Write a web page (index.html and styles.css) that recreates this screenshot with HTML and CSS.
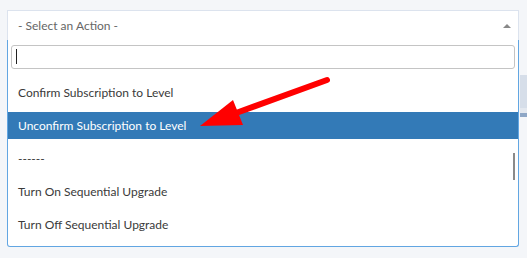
FILE: index.html
```html
<!DOCTYPE html>
<html lang="en">
<head>
    <meta charset="UTF-8">
    <meta name="viewport" content="width=device-width, initial-scale=1.0">
    <title>Select an Action</title>
    <link rel="stylesheet" href="styles.css">
</head>
<body>
    <div class="page">
        <div class="select-wrap">
            <div class="select">
                <span class="placeholder">- Select an Action -</span>
                <span class="arrow"></span>
            </div>

            <div class="dropdown">
                <div class="search">
                    <span class="caret"></span>
                </div>
                <ul class="results">
                    <li>Confirm Subscription to Level</li>
                    <li class="active">Unconfirm Subscription to Level</li>
                    <li>------</li>
                    <li>Turn On Sequential Upgrade</li>
                    <li>Turn Off Sequential Upgrade</li>
                </ul>
                <div class="scrollbar"></div>
            </div>

            <!-- annotation arrow -->
            <svg class="pointer" width="527" height="258" viewBox="0 0 527 258">
                <line x1="327" y1="80" x2="236" y2="113" stroke="#ff0000" stroke-width="6" stroke-linecap="round"/>
                <polygon points="200,126 233,100 243,125" fill="#ff0000"/>
            </svg>
        </div>

        <div class="aside">
            <div class="aside-head"></div>
            <div class="aside-line"></div>
        </div>
    </div>
</body>
</html>
```

FILE: styles.css
```css
* {
    margin: 0;
    padding: 0;
    box-sizing: border-box;
}

body {
    font-family: Lato, "Noto Sans", sans-serif;
    background: #f4f6f9;
    color: #333;
    height: 258px;
    overflow: hidden;
}

.page {
    display: flex;
    padding: 10px 0 0 7px;
}

.select-wrap {
    position: relative;
    width: 512px;
}

.select {
    height: 30px;
    display: flex;
    align-items: center;
    justify-content: space-between;
    padding: 0 7px 0 10px;
    background: #fff;
    border: 1px solid #dce3ee;
    border-bottom: none;
}

.placeholder {
    font-size: 12px;
    color: #666;
}

.arrow {
    width: 0;
    height: 0;
    border-left: 4px solid transparent;
    border-right: 4px solid transparent;
    border-bottom: 4px solid #888;
}

.dropdown {
    position: absolute;
    top: 30px;
    left: 0;
    right: 0;
    height: 207px;
    background: #fff;
    border: 1px solid #62a6e2;
    border-top: none;
    border-radius: 0 0 3px 3px;
    overflow: hidden;
}

.search {
    margin: 5px 3px 0 3px;
    height: 24px;
    border: 1px solid #c4c4c4;
    border-radius: 3px;
    padding: 3px 0 0 4px;
}

.caret {
    display: block;
    width: 1px;
    height: 15px;
    background: #222;
}

.results {
    list-style: none;
    margin-top: 10px;
}

.results li {
    height: 27px;
    margin-bottom: 6px;
    padding-left: 10px;
    display: flex;
    align-items: center;
    font-size: 12px;
    color: #3a3a3a;
}

.results li.active {
    background: #337ab7;
    color: #fff;
}

.scrollbar {
    position: absolute;
    left: 505px;
    top: 113px;
    width: 2px;
    height: 27px;
    background: #8a8a8a;
}

.pointer {
    position: absolute;
    left: -7px;
    top: -10px;
    pointer-events: none;
}

.aside {
    flex: 1;
    margin-top: 65px;
    margin-left: 1px;
}

.aside-head {
    height: 38px;
    background: #d6dee9;
    border-bottom: 5px solid #e3e8ef;
}

.aside-line {
    height: 4px;
    background: #8ea7c6;
}
```
